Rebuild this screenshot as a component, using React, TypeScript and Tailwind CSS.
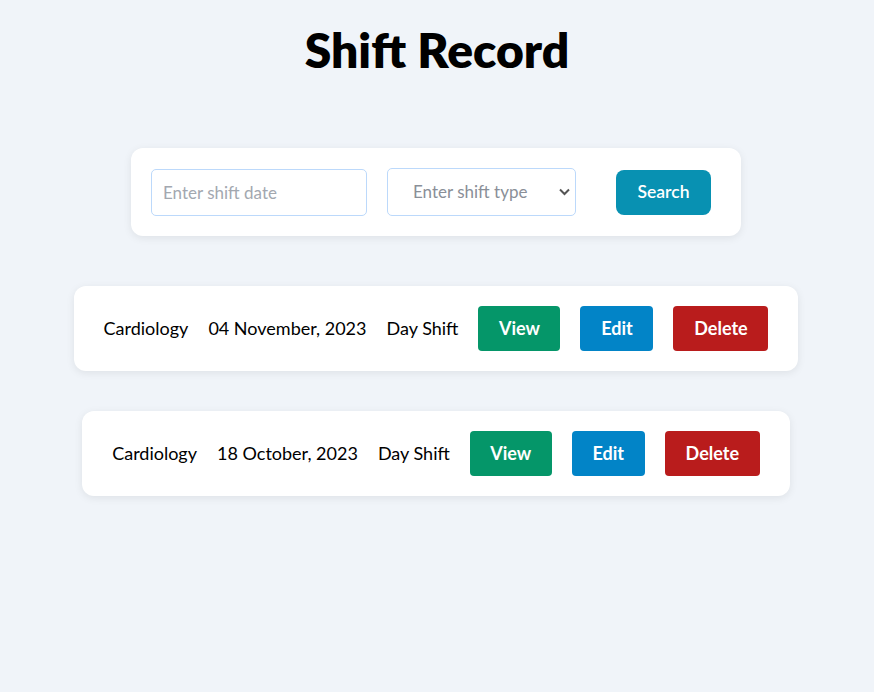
import React from "react";

const rows = [
  { dept: "Cardiology", date: "04 November, 2023", type: "Day Shift" },
  { dept: "Cardiology", date: "18 October, 2023", type: "Day Shift" },
];

export default function App() {
  return (
    <div className="min-h-[692px] bg-[#f0f4f9] pr-[2px] font-['Lato','Noto_Sans',sans-serif] text-black">
      <h1 className="pt-[22px] pl-[2px] text-center text-[48px] font-extrabold leading-[56px]">Shift Record</h1>

      <div className="mt-[70px] flex justify-center">
        <form className="flex items-center rounded-xl bg-white py-5 pl-5 pr-[30px] shadow-[0_2px_8px_rgba(0,0,0,0.08)]">
          <input
            type="text"
            placeholder="Enter shift date"
            className="h-[47px] w-[216px] rounded-[5px] border border-[#bcd9fb] px-[11px] text-[17px] placeholder:text-[#a3a8b0] focus:outline-none"
          />
          <div className="relative ml-5">
            <select className="h-[48px] w-[189px] appearance-none rounded-[5px] border border-[#bcd9fb] bg-white pl-[25px] pr-6 text-[17px] text-[#8a8f98] focus:outline-none">
              <option>Enter shift type</option>
            </select>
            <svg
              className="pointer-events-none absolute right-[6px] top-[20px]"
              width="11"
              height="8"
              viewBox="0 0 11 8"
              fill="none"
              stroke="#555"
              strokeWidth="2"
            >
              <path d="M1 1.5l4.5 4.5 4.5-4.5" />
            </svg>
          </div>
          <button
            type="button"
            className="ml-10 h-[45px] w-[95px] rounded-lg bg-[#0891b2] text-[17.5px] font-semibold text-white"
          >
            Search
          </button>
        </form>
      </div>

      <div className="mt-[50px] flex flex-col items-center gap-10">
        {rows.map((r, i) => (
          <div
            key={i}
            className="flex items-center gap-5 rounded-xl bg-white px-[30px] py-5 text-[18px] shadow-[0_2px_8px_rgba(0,0,0,0.08)]"
          >
            <span>{r.dept}</span>
            <span>{r.date}</span>
            <span>{r.type}</span>
            <button className="h-[45px] w-[82px] rounded-[4px] bg-[#059669] font-bold text-white">View</button>
            <button className="h-[45px] w-[73px] rounded-[4px] bg-[#0284c7] font-bold text-white">Edit</button>
            <button className="h-[45px] w-[95px] rounded-[4px] bg-[#b91c1c] font-bold text-white">Delete</button>
          </div>
        ))}
      </div>
    </div>
  );
}
